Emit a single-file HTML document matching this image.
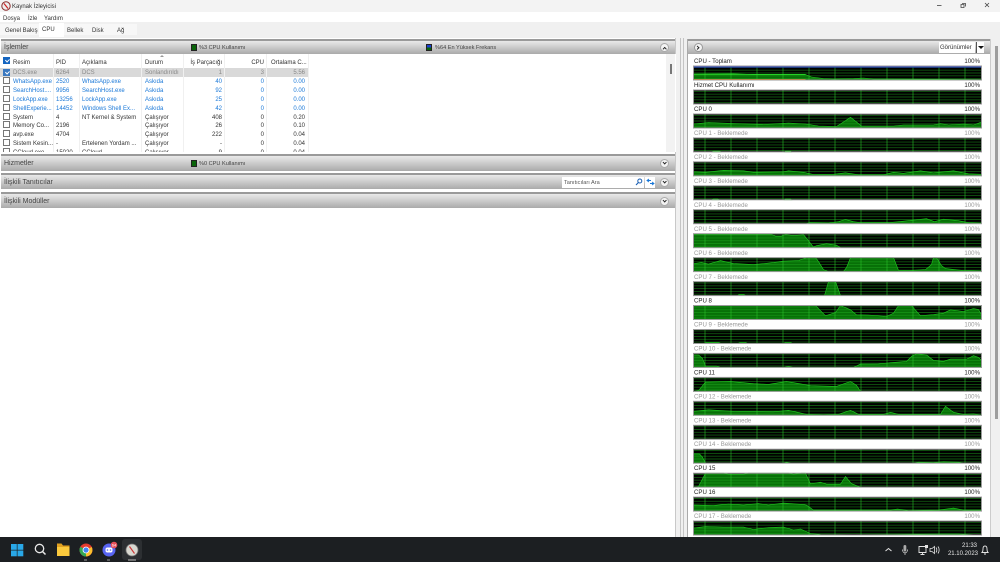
<!DOCTYPE html>
<html><head><meta charset="utf-8"><title>Kaynak İzleyicisi</title>
<style>
html,body{margin:0;padding:0;width:1000px;height:562px;overflow:hidden;background:#fff;font-family:"Liberation Sans",sans-serif;font-size:6px;color:#333}
div{position:absolute;box-sizing:border-box;white-space:nowrap}
.bar{left:1px;width:674px;background:linear-gradient(#e9e9e9,#d4d4d4 35%,#aaa);border-top:2px solid #9a9a9a;font-size:7px;color:#444}
.bar span{position:absolute;left:3px;top:3px}
.chev{position:absolute;width:9px;height:9px;border-radius:50%;background:#f3f3f3;border:1px solid #aaa;box-sizing:border-box}
.chev:after{content:"";position:absolute;left:2px;top:1.3px;width:2.4px;height:2.4px;border-right:1px solid #222;border-bottom:1px solid #222;transform:rotate(45deg)}
.chev.up:after{transform:rotate(225deg);top:3px}
.chev.rt:after{transform:rotate(-45deg);left:1px;top:2px}
.tab{top:28px;font-size:6px;color:#333}
.r{height:8.85px;left:0;width:308px;line-height:8.85px}
.r b{position:absolute;font-weight:normal;top:2px;line-height:8.85px}
.r.first b{top:1px}
.a{left:13px}.b{left:56px}.c{left:82px}.d{left:145px}
.e{right:86px}.f{right:44px}.g{right:3px}
.cb{position:absolute;left:3px;top:1px;width:7px;height:7px;border:1px solid #777;background:#fff;box-sizing:border-box}
.ck:after{content:"";position:absolute;left:1.5px;top:.2px;width:1.6px;height:3px;border-right:.8px solid #fff;border-bottom:.8px solid #fff;transform:rotate(45deg)}
.blue{color:#1a78d8}
.leg{width:6px;height:7px;top:3px;background:#0a640a;border:1px solid #222}
.lt{font-size:5.6px;top:3.5px;color:#444}
</style></head><body>

<div style="left:0;top:0;width:1000px;height:12px;background:#f3f3f3"></div>
<svg style="position:absolute;left:1px;top:1px" width="10" height="10" viewBox="0 0 10 10"><circle cx="5" cy="5" r="4.2" fill="#eee" stroke="#8a2b2b" stroke-width="1"/><path d="M3 2.5L7 7.5" stroke="#c22" stroke-width="1.2"/></svg>
<div style="left:12px;top:4px;font-size:6px;color:#333">Kaynak İzleyicisi</div>
<svg style="position:absolute;left:930px;top:0" width="70" height="12"><path d="M7 5.5H11.500" stroke="#444" stroke-width=".8"/><path d="M32 3.500h3.500v3M31 4.500h3v3h-3z" fill="none" stroke="#444" stroke-width=".8"/><path d="M55 3l4 4M59 3l-4 4" stroke="#444" stroke-width=".8"/></svg>

<div style="left:0;top:12px;width:1000px;height:10px;background:#fff"></div>
<div style="left:3px;top:15.500px;color:#333">Dosya</div>
<div style="left:28px;top:15.500px;color:#333">İzle</div>
<div style="left:44px;top:15.500px;color:#333">Yardım</div>

<div style="left:0;top:22px;width:1000px;height:16px;background:#f0f0f0"></div>
<div style="left:0;top:24px;width:137px;height:11px;background:#f7f7f7"></div>
<div style="left:39px;top:23px;width:25px;height:14px;background:#fff"></div>
<div class="tab" style="left:5px">Genel Bakış</div>
<div class="tab" style="left:42px;top:27px">CPU</div>
<div class="tab" style="left:67px">Bellek</div>
<div class="tab" style="left:92px">Disk</div>
<div class="tab" style="left:117px">Ağ</div>

<div style="left:0;top:38px;width:1000px;height:499px;background:#f0f0f0"></div>
<div style="left:0;top:38px;width:676px;height:499px;background:#fff;border-right:1px solid #c8c8c8"></div>

<div class="bar" style="top:39px;height:15px"><span>İşlemler</span>
<div class="leg" style="left:190px"></div><div class="lt" style="left:198px">%3 CPU Kullanımı</div>
<div class="leg" style="left:425px;background:linear-gradient(#1b3fd0 50%,#0a640a 50%)"></div><div class="lt" style="left:434px">%64 En Yüksek Frekans</div>
<div class="chev up" style="left:659px;top:2px"></div></div>

<div style="left:0;top:54px;width:676px;height:98px;overflow:hidden;background:#fff">
 <div style="left:666px;top:0;width:9px;height:98px;background:#f2f2f2"></div>
 <div style="left:669.5px;top:10px;width:2px;height:10px;background:#777"></div>
 <div style="left:0;top:13.5px;width:308px;height:9px;background:#d9d9d9"></div>
 <div style="left:53px;top:0;width:1px;height:98px;background:#f0f0f0"></div>
 <div style="left:79px;top:0;width:1px;height:98px;background:#f0f0f0"></div>
 <div style="left:141px;top:0;width:1px;height:98px;background:#f0f0f0"></div>
 <div style="left:183px;top:0;width:1px;height:98px;background:#f0f0f0"></div>
 <div style="left:224px;top:0;width:1px;height:98px;background:#f0f0f0"></div>
 <div style="left:266px;top:0;width:1px;height:98px;background:#f0f0f0"></div>
 <div style="left:308px;top:0;width:1px;height:98px;background:#f0f0f0"></div>
 <div class="cb ck" style="top:3px;background:#1565c0;border-color:#1565c0"></div>
 <div style="left:13px;top:5.500px">Resim</div><div style="left:56px;top:5.500px">PID</div><div style="left:82px;top:5.500px">Açıklama</div><div style="left:145px;top:5.500px">Durum</div>
 <div style="right:454px;top:5.500px">İş Parçacığı</div><div style="right:412px;top:5.500px">CPU</div><div style="left:271px;top:5.500px">Ortalama C...</div>
 <div style="left:160px;top:1px;width:0;height:0;border-left:2px solid transparent;border-right:2px solid transparent;border-bottom:2px solid #999"></div>

 <div class="r first" style="top:13.5px;color:#888"><span class="cb ck" style="background:#3a78c0;border-color:#3a78c0"></span><b class="a">DCS.exe</b><b class="b">6264</b><b class="c">DCS</b><b class="d">Sonlandırıldı</b><b class="e">1</b><b class="f">3</b><b class="g">5.56</b></div>
 <div class="r blue" style="top:22.3px"><span class="cb"></span><b class="a">WhatsApp.exe</b><b class="b">2520</b><b class="c">WhatsApp.exe</b><b class="d">Askıda</b><b class="e">40</b><b class="f">0</b><b class="g">0.00</b></div>
 <div class="r blue" style="top:31.1px"><span class="cb"></span><b class="a">SearchHost....</b><b class="b">9956</b><b class="c">SearchHost.exe</b><b class="d">Askıda</b><b class="e">92</b><b class="f">0</b><b class="g">0.00</b></div>
 <div class="r blue" style="top:39.9px"><span class="cb"></span><b class="a">LockApp.exe</b><b class="b">13256</b><b class="c">LockApp.exe</b><b class="d">Askıda</b><b class="e">25</b><b class="f">0</b><b class="g">0.00</b></div>
 <div class="r blue" style="top:48.7px"><span class="cb"></span><b class="a">ShellExperie...</b><b class="b">14452</b><b class="c">Windows Shell Ex...</b><b class="d">Askıda</b><b class="e">42</b><b class="f">0</b><b class="g">0.00</b></div>
 <div class="r" style="top:57.5px"><span class="cb"></span><b class="a">System</b><b class="b">4</b><b class="c">NT Kernel &amp; System</b><b class="d">Çalışıyor</b><b class="e">408</b><b class="f">0</b><b class="g">0.20</b></div>
 <div class="r" style="top:66.3px"><span class="cb"></span><b class="a">Memory Co...</b><b class="b">2196</b><b class="d">Çalışıyor</b><b class="e">26</b><b class="f">0</b><b class="g">0.10</b></div>
 <div class="r" style="top:75.1px"><span class="cb"></span><b class="a">avp.exe</b><b class="b">4704</b><b class="d">Çalışıyor</b><b class="e">222</b><b class="f">0</b><b class="g">0.04</b></div>
 <div class="r" style="top:84px"><span class="cb"></span><b class="a">Sistem Kesin...</b><b class="b">-</b><b class="c">Ertelenen Yordam ...</b><b class="d">Çalışıyor</b><b class="e">-</b><b class="f">0</b><b class="g">0.04</b></div>
 <div class="r" style="top:92.8px"><span class="cb"></span><b class="a">CCloud.exe</b><b class="b">15020</b><b class="c">CCloud</b><b class="d">Çalışıyor</b><b class="e">9</b><b class="f">0</b><b class="g">0.04</b></div>
</div>

<div class="bar" style="top:154px;height:17px"><span style="top:4px">Hizmetler</span>
<div class="leg" style="left:190px;top:4px"></div><div class="lt" style="left:198px;top:4.5px">%0 CPU Kullanımı</div>
<div class="chev" style="left:659px;top:3px"></div></div>
<div class="bar" style="top:173px;height:16px"><span style="top:4px">İlişkili Tanıtıcılar</span>
<div style="left:561px;top:2px;width:82px;height:11px;background:#fff;font-size:5.6px;color:#555;padding:3px 0 0 2px">Tanıtıcıları Ara</div>
<svg style="position:absolute;left:634px;top:3px" width="8" height="8"><circle cx="4.8" cy="3" r="2" fill="none" stroke="#1a5fb4" stroke-width="1"/><path d="M3.4 4.5L1 7" stroke="#1a5fb4" stroke-width="1.1"/></svg>
<div style="left:644px;top:2px;width:10px;height:11px;background:#fff"></div>
<svg style="position:absolute;left:645px;top:3px" width="9" height="9"><path d="M1 2.5h4M3 1L1 2.5 3 4M8 5.5H4M6 4l2 1.5L6 7" fill="none" stroke="#1a78d8" stroke-width=".9"/></svg>
<div class="chev" style="left:659px;top:3px"></div></div>
<div class="bar" style="top:192px;height:16px"><span style="top:4px">İlişkili Modüller</span>
<div class="chev" style="left:659px;top:3px"></div></div>

<div style="left:680px;top:38px;width:1px;height:499px;background:#c4c4c4"></div>
<div style="left:683px;top:38px;width:1px;height:499px;background:#c4c4c4"></div>
<div style="left:687px;top:39px;width:304px;height:498px;background:#fff;border-left:1px solid #aaa;border-right:1px solid #ccc"></div>
<div style="left:688px;top:39px;width:302px;height:15px;background:linear-gradient(#e9e9e9,#d4d4d4 35%,#aaa);border-top:2px solid #9a9a9a">
 <div class="chev rt" style="left:6px;top:2px;border-color:#999"></div>
 <div style="left:251px;top:1px;width:36px;height:11px;background:#fff;color:#333;padding-top:2.5px;padding-left:1px;font-size:6px">Görünümler</div>
 <div style="left:288px;top:1px;width:8px;height:11px;background:#fff;border-left:1px solid #555"></div>
 <div style="left:289.5px;top:5px;width:0;height:0;border-left:3px solid transparent;border-right:3px solid transparent;border-top:3px solid #111"></div>
</div>
<div style="left:995px;top:46px;width:2.5px;height:373px;background:#9e9e9e"></div>

<svg style="position:absolute;left:0;top:0" width="1000" height="562" viewBox="0 0 1000 562" font-family="'Liberation Sans',sans-serif" font-size="6.1">
<defs>
<g id="gl" fill="none">
<path d="M0 1.4H288M0 4.2H288M0 7H288M0 9.8H288M0 12.6H288" stroke="#1fa81f" stroke-opacity=".5" stroke-width=".9"/>
<path d="M11.5 0V14M37.5 0V14M63.5 0V14M89.5 0V14M115.5 0V14M141.5 0V14M167.5 0V14M193.5 0V14M219.5 0V14M245.5 0V14M271.5 0V14" stroke="#2cc82c" stroke-opacity=".7" stroke-width=".8"/>
</g>
</defs>
<style>.on{fill:#222}.off{fill:#999}polygon{fill:#077007;stroke:#1fd01f;stroke-width:.6}.bd{fill:none;stroke:#9a9a9a;stroke-width:1}.bk{fill:#000}</style>

<!-- Toplam -->
<text x="694" y="63" class="on">CPU - Toplam</text><text x="980" y="63" text-anchor="end" class="on">100%</text>
<g transform="translate(693.5,66)"><rect class="bk" width="288" height="14"/><polygon points="0,14 0,8 40,7.8 60,8.5 112,8.5 118,11 130,12.5 140,13 160,12.5 170,12 180,13 288,13.5 288,14"/><use href="#gl"/><path d="M0 8.3H112" stroke="#30f030" stroke-width=".7"/><path d="M0 13.5H112" stroke="#c97a10" stroke-width="1"/><path d="M0 1H288" stroke="#2a3fc0" stroke-width="1.2"/><rect class="bd" width="288" height="14"/></g>
<!-- Hizmet -->
<text x="694" y="87" class="on">Hizmet CPU Kullanımı</text><text x="980" y="87" text-anchor="end" class="on">100%</text>
<g transform="translate(693.5,90)"><rect class="bk" width="288" height="14"/><use href="#gl"/><rect class="bd" width="288" height="14"/></g>
<!-- CPU 0 -->
<text x="694" y="111" class="on">CPU 0</text><text x="980" y="111" text-anchor="end" class="on">100%</text>
<g transform="translate(693.5,114)"><rect class="bk" width="288" height="14"/><polygon points="0,14 0,10 15,8.5 40,9.5 70,10.5 95,9 112,10 125,12 143,12.5 150,8 157,3.3 163,8 168,12 200,12 210,11 240,11 247,9.5 255,11 270,10 280,11 288,8 288,14"/><use href="#gl"/><rect class="bd" width="288" height="14"/></g>
<!-- CPU 1 -->
<text x="694" y="135" class="off">CPU 1 - Beklemede</text><text x="980" y="135" text-anchor="end" class="off">100%</text>
<g transform="translate(693.5,137.9)"><rect class="bk" width="288" height="14"/><polygon points="18,14 20,13.3 26,13.3 28,14"/><polygon points="91,14 92,13.3 97,13.3 98,14"/><use href="#gl"/><rect class="bd" width="288" height="14"/></g>
<!-- CPU 2 -->
<text x="694" y="159" class="off">CPU 2 - Beklemede</text><text x="980" y="159" text-anchor="end" class="off">100%</text>
<g transform="translate(693.5,161.8)"><rect class="bk" width="288" height="14"/><polygon points="0,14 0,10 12,10.5 30,8.5 50,9 60,10.5 90,10 95,9 110,10.5 120,12.7 140,12.5 152,11 165,13 190,13 200,10.5 210,11.5 227,9 240,11 260,9 275,12 288,12.5 288,14"/><use href="#gl"/><rect class="bd" width="288" height="14"/></g>
<!-- CPU 3 -->
<text x="694" y="183" class="off">CPU 3 - Beklemede</text><text x="980" y="183" text-anchor="end" class="off">100%</text>
<g transform="translate(693.5,185.8)"><rect class="bk" width="288" height="14"/><polygon points="18,14 20,13.3 24,13.3 26,14"/><polygon points="91,14 92,13.3 97,13.3 98,14"/><use href="#gl"/><rect class="bd" width="288" height="14"/></g>
<!-- CPU 4 -->
<text x="694" y="207" class="off">CPU 4 - Beklemede</text><text x="980" y="207" text-anchor="end" class="off">100%</text>
<g transform="translate(693.5,209.7)"><rect class="bk" width="288" height="14"/><polygon points="113,14 116,13 135,13.3 145,12 152,9.7 160,12 167,13 195,13 210,11.5 233,9 241,12 250,9.5 265,11 275,13 288,13.5 288,14"/><use href="#gl"/><rect class="bd" width="288" height="14"/></g>
<!-- CPU 5 -->
<text x="694" y="231" class="off">CPU 5 - Beklemede</text><text x="980" y="231" text-anchor="end" class="off">100%</text>
<g transform="translate(693.5,233.7)"><rect class="bk" width="288" height="14"/><polygon points="0,14 0,.7 78,.7 82,2.5 88,2.5 92,.7 100,2 110,1 115,7 120,13.5 123,12 133,10 143,11.5 147,14"/><use href="#gl"/><rect class="bd" width="288" height="14"/></g>
<!-- CPU 6 -->
<text x="694" y="255" class="off">CPU 6 - Beklemede</text><text x="980" y="255" text-anchor="end" class="off">100%</text>
<g transform="translate(693.5,257.6)"><rect class="bk" width="288" height="14"/><polygon points="0,14 0,6 8,5 15,6.5 27,3 40,6 60,7 80,5 90,3.5 105,3 113,0 122,0 125,4 130,12 135,14 150,14 153,10 157,0 200,0 205,12.7 215,13 232,12 238,7 240,0 243,0 248,8 252,11 270,13 288,13.5 288,14"/><use href="#gl"/><rect class="bd" width="288" height="14"/></g>
<!-- CPU 7 -->
<text x="694" y="279" class="off">CPU 7 - Beklemede</text><text x="980" y="279" text-anchor="end" class="off">100%</text>
<g transform="translate(693.5,281.6)"><rect class="bk" width="288" height="14"/><polygon points="44,14 46,12.7 50,12.7 52,14"/><polygon points="131,14 135,0 142,0 147,14"/><use href="#gl"/><rect class="bd" width="288" height="14"/></g>
<!-- CPU 8 -->
<text x="694" y="302.500" class="on">CPU 8</text><text x="980" y="302.500" text-anchor="end" class="on">100%</text>
<g transform="translate(693.5,305.500)"><rect class="bk" width="288" height="14"/><polygon points="0,14 0,0 122,0 132,10.3 142,7 147,0 157,4.300 163,9.300 175,9.500 193,11 200,7.700 205,0 218,0 227,10.300 240,9 250,7.700 257,4.300 270,6 280,3 285,4 288,9.500 288,14"/><use href="#gl"/><rect class="bd" width="288" height="14"/></g>
<!-- CPU 9 -->
<text x="694" y="326.500" class="off">CPU 9 - Beklemede</text><text x="980" y="326.500" text-anchor="end" class="off">100%</text>
<g transform="translate(693.5,329.500)"><rect class="bk" width="288" height="14"/><polygon points="10,14 14,12.800 24,12.800 28,14"/><polygon points="44,14 47,13 52,13 54,14"/><polygon points="90,14 92,13 97,13 99,14"/><use href="#gl"/><rect class="bd" width="288" height="14"/></g>
<!-- CPU 10 -->
<text x="694" y="350.500" class="off">CPU 10 - Beklemede</text><text x="980" y="350.500" text-anchor="end" class="off">100%</text>
<g transform="translate(693.5,353.400)"><rect class="bk" width="288" height="14"/><polygon points="0,14 0,1.500 5,1.500 9,5 12,12.500 23,12.700 27,14 90,14 95,13 100,14 160,14 167,10.700 185,10.500 200,9 213,8 218,3 223,.3 233,1.500 240,7 250,8 257,5.700 273,5.700 280,2.300 285,4 288,7 288,14"/><use href="#gl"/><rect class="bd" width="288" height="14"/></g>
<!-- CPU 11 -->
<text x="694" y="374.500" class="on">CPU 11</text><text x="980" y="374.500" text-anchor="end" class="on">100%</text>
<g transform="translate(693.5,377.400)"><rect class="bk" width="288" height="14"/><polygon points="0,14 5,13.300 12,4.700 37,4 60,6.300 75,7 93,4 113,7.500 117,8.300 143,9 157,4 163,8 167,14"/><use href="#gl"/><rect class="bd" width="288" height="14"/></g>
<!-- CPU 12 -->
<text x="694" y="398.300" class="off">CPU 12 - Beklemede</text><text x="980" y="398.300" text-anchor="end" class="off">100%</text>
<g transform="translate(693.5,401.300)"><rect class="bk" width="288" height="14"/><polygon points="0,14 0,10 15,8.500 40,10 80,10.500 95,9 113,13 130,13.500 145,13 157,9 165,13 190,13 197,11 205,13 247,13 252,5 260,11 270,13 280,12.500 288,14"/><use href="#gl"/><rect class="bd" width="288" height="14"/></g>
<!-- CPU 13 -->
<text x="694" y="422.300" class="off">CPU 13 - Beklemede</text><text x="980" y="422.300" text-anchor="end" class="off">100%</text>
<g transform="translate(693.5,425.300)"><rect class="bk" width="288" height="14"/><use href="#gl"/><rect class="bd" width="288" height="14"/></g>
<!-- CPU 14 -->
<text x="694" y="446.200" class="off">CPU 14 - Beklemede</text><text x="980" y="446.200" text-anchor="end" class="off">100%</text>
<g transform="translate(693.5,449.200)"><rect class="bk" width="288" height="14"/><polygon points="0,14 0,4.700 6,4.700 9,8 12,14"/><polygon points="90,14 93,13 97,14"/><polygon points="220,14 225,13 240,13.300 250,12.500 265,13 270,14"/><use href="#gl"/><rect class="bd" width="288" height="14"/></g>
<!-- CPU 15 -->
<text x="694" y="470.200" class="on">CPU 15</text><text x="980" y="470.200" text-anchor="end" class="on">100%</text>
<g transform="translate(693.5,473.200)"><rect class="bk" width="288" height="14"/><polygon points="0,14 5,13.300 12,0 30,0 35,1 50,1 55,0 95,0 100,1 108,0 112,0 117,10.700 127,9 133,11 147,11 152,3.300 158,10.500 167,14"/><use href="#gl"/><rect class="bd" width="288" height="14"/></g>
<!-- CPU 16 -->
<text x="694" y="494.100" class="on">CPU 16</text><text x="980" y="494.100" text-anchor="end" class="on">100%</text>
<g transform="translate(693.5,497.100)"><rect class="bk" width="288" height="14"/><polygon points="0,14 0,8 20,8.500 35,7 50,8 65,6.500 75,8 90,6 110,7.500 113,8 120,13 197,13 204,12 215,13.500 245,13 260,11 270,13 288,13 288,14"/><use href="#gl"/><rect class="bd" width="288" height="14"/></g>
<!-- CPU 17 -->
<text x="694" y="518" class="off">CPU 17 - Beklemede</text><text x="980" y="518" text-anchor="end" class="off">100%</text>
<g transform="translate(693.5,521)"><rect class="bk" width="288" height="14"/><polygon points="0,14 0,7 12,5.500 30,6 50,6 60,8.500 75,6.500 90,6 100,9 107,8 117,12.500 127,13.500 160,13.800 200,13.500 250,13 265,13 280,13.800 288,14"/><use href="#gl"/><rect class="bd" width="288" height="14"/></g>
</svg>

<!-- taskbar -->
<div style="left:0;top:537px;width:1000px;height:25px;background:#1c1f22"></div>
<div style="left:122px;top:539px;width:20px;height:21px;background:#2c2f32;border-radius:3px"></div>
<svg style="position:absolute;left:0;top:537px" width="170" height="25" viewBox="0 0 170 25">
<g fill="#29a8e8"><rect x="11" y="7" width="5.800" height="5.800"/><rect x="17.500" y="7" width="5.800" height="5.800"/><rect x="11" y="13.500" width="5.800" height="5.800"/><rect x="17.500" y="13.500" width="5.800" height="5.800"/></g>
<circle cx="39.500" cy="11.500" r="4.200" fill="none" stroke="#e8e8e8" stroke-width="1.300"/><path d="M42.500 14.500L45.500 17.500" stroke="#e8e8e8" stroke-width="1.500"/>
<path d="M57 6.500h4.500l1.500 2h6.500v2H57z" fill="#e0a020"/><rect x="57" y="10" width="12.500" height="9" fill="#fbc93d"/>
<circle cx="86" cy="13" r="6.500" fill="#e33b2e"/><path d="M86 13L91.700 10A6.500 6.500 0 0 1 86 19.500z" fill="#fbc02d"/><path d="M86 13v6.500A6.500 6.500 0 0 1 80.400 9.700z" fill="#34a853"/><circle cx="86" cy="13" r="3" fill="#4285f4" stroke="#fff" stroke-width=".8"/>
<circle cx="109" cy="13" r="6.500" fill="#5865f2"/><rect x="105.500" y="10.500" width="7" height="5" rx="2" fill="#fff"/><circle cx="107.500" cy="13" r=".8" fill="#5865f2"/><circle cx="110.500" cy="13" r=".8" fill="#5865f2"/>
<circle cx="114" cy="8" r="3.300" fill="#e8505a"/><text x="114" y="9.700" text-anchor="middle" font-size="4" fill="#fff" font-family="Liberation Sans, sans-serif">64</text>
<circle cx="132" cy="13" r="6" fill="#d8d8d0" stroke="#777" stroke-width=".8"/><path d="M129.500 9.500L134.500 16.500" stroke="#c33" stroke-width="1.100"/>
<rect x="84" y="22.500" width="3" height="1" fill="#999"/><rect x="107" y="22.500" width="3" height="1" fill="#999"/><rect x="128" y="22.500" width="8" height="1" fill="#bbb"/>
</svg>
<svg style="position:absolute;left:880px;top:537px" width="120" height="25" viewBox="0 0 120 25" fill="none" stroke="#e4e4e4">
<path d="M5.500 14L8.500 11.500 11.500 14" stroke-width="1"/>
<rect x="23.500" y="8" width="2.800" height="6.500" rx="1.400" fill="#aaa" stroke="none"/><path d="M22.500 12.500c0 4.500 5 4.500 5 0M25 15.500v2.500" stroke-width=".7"/>
<path d="M46 9.500h-7v6h7zM40.500 17.500h4M42.500 15.500v2" stroke-width=".9"/><rect x="45" y="8" width="3" height="3" fill="#e4e4e4" stroke="none"/>
<path d="M50 11.500h2l2.500-2v7l-2.500-2h-2zM56 10.500c1 1.500 1 3.500 0 5M58 9.500c1.500 2 1.500 5 0 7" stroke-width=".8"/>
<path d="M108 15.500h-6c1-1 1-2 1-3.500 0-2 1-3 2-3s2 1 2 3c0 1.500 0 2.500 1 3.500zM104 17h2" stroke-width=".9"/>
</svg>
<div style="right:23px;top:542.500px;color:#e8e8e8;font-size:6px">21:33</div>
<div style="right:22px;top:550.500px;color:#e8e8e8;font-size:6px">21.10.2023</div>
</body></html>
